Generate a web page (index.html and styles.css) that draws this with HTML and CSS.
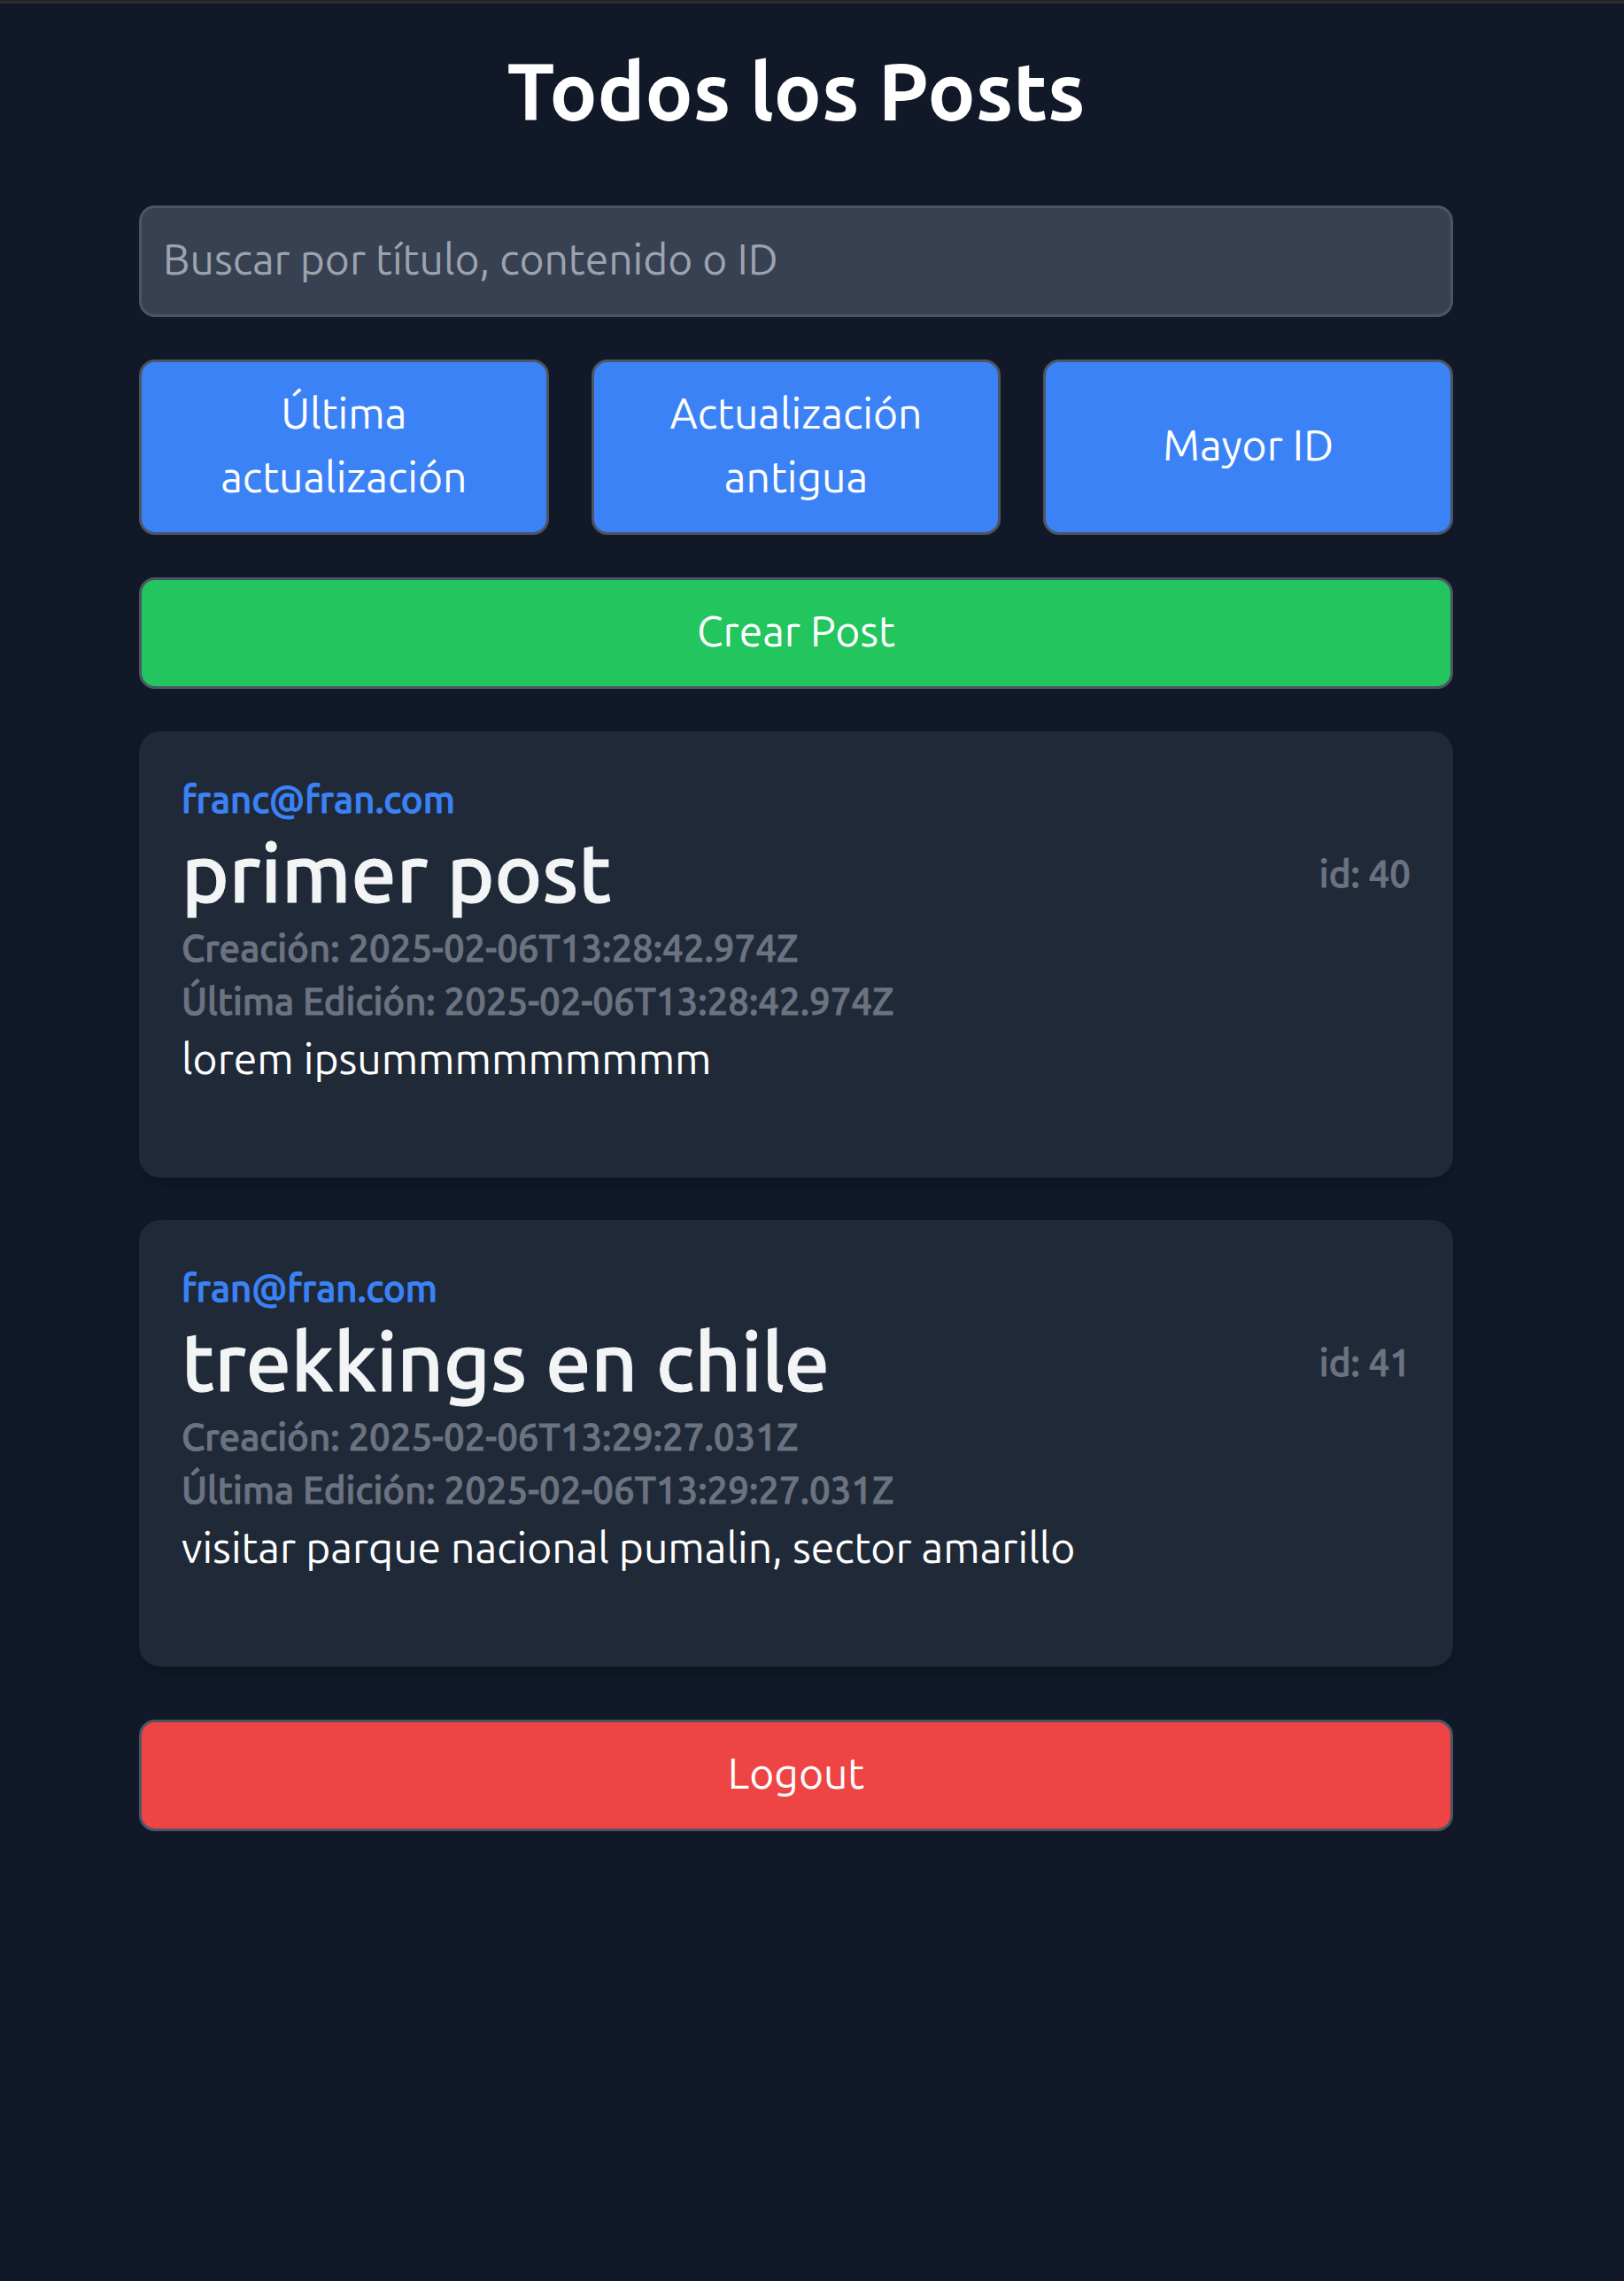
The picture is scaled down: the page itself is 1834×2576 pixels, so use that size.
FILE: index.html
```
<!DOCTYPE html>
<html lang="es">
<head>
  <meta charset="utf-8">
  <meta name="viewport" content="width=device-width, initial-scale=1">
  <title>Todos los Posts</title>
  <link rel="stylesheet" href="styles.css">
</head>
<body>
  <main class="page">
    <h1 class="page-title">Todos los Posts</h1>

    <div class="stack">
      <input class="control search" type="search" aria-label="Buscar posts" placeholder="Buscar por título, contenido o ID">

      <div class="sort-row">
        <button class="control button button-blue" type="button">Última actualización</button>
        <button class="control button button-blue" type="button">Actualización antigua</button>
        <button class="control button button-blue" type="button">Mayor ID</button>
      </div>

      <button class="control button button-green" type="button">Crear Post</button>

      <article class="card">
        <a class="author" href="#">franc@fran.com</a>
        <div class="card-head">
          <h2 class="card-title">primer post</h2>
          <span class="meta">id: 40</span>
        </div>
        <p class="meta">Creación: 2025-02-06T13:28:42.974Z</p>
        <p class="meta">Última Edición: 2025-02-06T13:28:42.974Z</p>
        <p class="content">lorem ipsummmmmmmmm</p>
      </article>

      <article class="card">
        <a class="author" href="#">fran@fran.com</a>
        <div class="card-head">
          <h2 class="card-title">trekkings en chile</h2>
          <span class="meta">id: 41</span>
        </div>
        <p class="meta">Creación: 2025-02-06T13:29:27.031Z</p>
        <p class="meta">Última Edición: 2025-02-06T13:29:27.031Z</p>
        <p class="content">visitar parque nacional pumalin, sector amarillo</p>
      </article>
    </div>

    <button class="control button button-red logout" type="button">Logout</button>
  </main>
</body>
</html>
```
FILE: styles.css
```
*,
*::before,
*::after {
  box-sizing: border-box;
}

body,
h1,
h2,
p {
  margin: 0;
}

html {
  border-top: 2px solid #25282a;
  background: #111827;
}

body {
  border-top: 2px solid #322e31;
  color: #fff;
  font-family: Ubuntu, "Noto Sans", sans-serif;
  font-size: 48px;
  font-weight: 400;
  line-height: 72px;
}

.page {
  padding: 45px 193px 48px 157px;
}

.page-title {
  margin-bottom: 75px;
  font-size: 90px;
  font-weight: 700;
  line-height: 108px;
  text-align: center;
}

.stack {
  display: flex;
  flex-direction: column;
  gap: 48px;
}

.control {
  display: block;
  width: 100%;
  margin: 0;
  padding: 21px 24px 27px;
  border: 3px solid #4b5563;
  border-radius: 18px;
  color: #fff;
  font: inherit;
  appearance: none;
}

.search {
  height: 126px;
  background: #374151;
}

.search::placeholder {
  color: #9ca3af;
  opacity: 1;
}

.sort-row {
  display: grid;
  grid-template-columns: repeat(3, 1fr);
  gap: 48px;
}

.button {
  text-align: center;
  cursor: pointer;
}

.button-blue {
  background: #3b82f6;
}

.button-green {
  background: #22c55e;
}

.button-red {
  background: #ef4444;
}

.card {
  padding: 47px 48px 101px;
  border-radius: 24px;
  background: #1f2937;
  box-shadow: 0 12px 18px -3px rgba(0, 0, 0, 0.1), 0 6px 12px -6px rgba(0, 0, 0, 0.1);
}

.card-head {
  display: flex;
  align-items: center;
  justify-content: space-between;
}

.author,
.meta,
.card-title {
  font-weight: 500;
  -webkit-text-stroke: 1px currentColor;
}

.author,
.meta {
  color: #6b7280;
  font-size: 42px;
  line-height: 60px;
}

.author {
  display: block;
  color: #3b82f6;
  text-decoration: none;
}

.card-title {
  margin-bottom: 4px;
  color: #f3f4f6;
  font-size: 91px;
  line-height: 104px;
}

.content {
  line-height: 68px;
}

.logout {
  margin-top: 60px;
}
```
